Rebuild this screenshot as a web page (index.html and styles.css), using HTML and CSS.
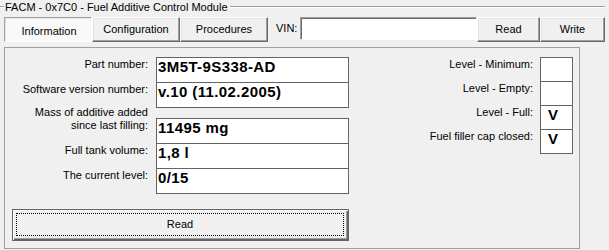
FILE: index.html
```html
<!DOCTYPE html>
<html lang="en">
<head>
  <meta charset="UTF-8">
  <title>FACM - Fuel Additive Control Module</title>
  <link rel="stylesheet" href="styles.css">
</head>
<body>
  <div class="window">
    <!-- group title -->
    <div class="group-title">
      <span class="line line-start"></span>
      <span class="title">FACM - 0x7C0 - Fuel Additive Control Module</span>
      <span class="line line-end"></span>
    </div>

    <!-- tabs + VIN -->
    <div class="toolbar">
      <div class="tabs">
        <button class="tab active">Information</button>
        <button class="tab">Configuration</button>
        <button class="tab">Procedures</button>
      </div>
      <label class="vin-label" for="vin">VIN:</label>
      <input id="vin" class="vin-input" type="text">
      <button class="btn btn-read">Read</button>
      <button class="btn btn-write">Write</button>
    </div>

    <!-- information page -->
    <div class="panel">
      <div class="fields">
        <div class="left-col">
          <div class="row">
            <span class="label">Part number:</span>
            <div class="value">3M5T-9S338-AD</div>
          </div>
          <div class="row">
            <span class="label">Software version number:</span>
            <div class="value">v.10 (11.02.2005)</div>
          </div>
          <div class="row tall">
            <span class="label">Mass of additive added<br>since last filling:</span>
            <div class="value">11495 mg</div>
          </div>
          <div class="row">
            <span class="label">Full tank volume:</span>
            <div class="value">1,8 l</div>
          </div>
          <div class="row">
            <span class="label">The current level:</span>
            <div class="value">0/15</div>
          </div>
        </div>

        <div class="right-col">
          <div class="row">
            <span class="label">Level - Minimum:</span>
            <div class="flag"></div>
          </div>
          <div class="row">
            <span class="label">Level - Empty:</span>
            <div class="flag"></div>
          </div>
          <div class="row">
            <span class="label">Level - Full:</span>
            <div class="flag">V</div>
          </div>
          <div class="row">
            <span class="label">Fuel filler cap closed:</span>
            <div class="flag">V</div>
          </div>
        </div>
      </div>

      <button class="btn-default"><span class="focus">Read</span></button>
    </div>
  </div>
</body>
</html>
```

FILE: styles.css
```css
/* base */
body {
  margin: 0;
  background: #f0f0f0;
  font-family: 'Liberation Sans', Arial, sans-serif;
  font-size: 11px;
  line-height: 13px;
  color: #000;
}

.window {
  width: 609px;
  height: 250px;
  overflow: hidden;
}

/* group title */
.group-title {
  display: flex;
  align-items: center;
  width: 605px;
  height: 14px;
}

.line {
  height: 0;
  border-top: 1px solid #a0a0a0;
  border-bottom: 1px solid #fff;
}

.line-start {
  width: 4px;
}

.title {
  margin: 0 2px 0 1px;
  white-space: nowrap;
}

.line-end {
  flex: 1;
}

/* toolbar */
.toolbar {
  display: flex;
  align-items: flex-start;
  margin: 3px 0 0 4px;
}

.tabs {
  display: flex;
}

button {
  font: inherit;
  color: #000;
  margin: 0;
  padding: 0;
}

.tab,
.btn {
  height: 25px;
  background: #f0f0f0;
  border: 1px solid;
  border-color: #fff #696969 #696969 #fff;
  box-shadow: inset -1px -1px #a0a0a0, inset 1px 1px #e3e3e3;
}

.tab {
  width: 88px;
}

.tab.active {
  background: #f9f9f9;
  border-color: #a0a0a0 #fff #fff #a0a0a0;
  box-shadow: inset 1px 1px #e3e3e3;
  padding: 3px 0 0 2px;
}

.vin-label {
  width: 24px;
  margin: 5px 0 0 8px;
}

.vin-input {
  box-sizing: border-box;
  width: 177px;
  height: 23px;
  margin: 0;
  padding: 0 2px;
  background: #fff;
  border: 1px solid;
  border-color: #a0a0a0 #fff #fff #a0a0a0;
  box-shadow: inset 1px 1px #696969;
  outline: none;
}

.btn-read {
  width: 63px;
}

.btn-write {
  width: 65px;
}

/* information page */
.panel {
  box-sizing: border-box;
  width: 576px;
  margin: 5px 0 0 4px;
  padding: 9px 6px 7px 7px;
  border: 1px solid #a0a0a0;
}

.fields {
  display: flex;
  justify-content: space-between;
}

.row {
  display: flex;
  align-items: flex-start;
}

.row + .row {
  margin-top: -1px;
}

.row.tall {
  margin-top: -3px;
}

.label {
  padding-top: 1px;
  text-align: right;
  white-space: nowrap;
}

.left-col .label {
  width: 136px;
  margin-right: 8px;
}

.row.tall .value {
  margin-top: 13px;
}

.value,
.flag {
  box-sizing: border-box;
  background: #fff;
  border: 1px solid #646464;
  font-weight: bold;
  font-size: 15px;
  line-height: 18px;
  letter-spacing: 0.4px;
  white-space: nowrap;
}

.value {
  width: 193px;
  height: 26px;
  padding-left: 1px;
}

.right-col .row {
  justify-content: flex-end;
}

.right-col .label {
  margin-right: 7px;
}

.flag {
  width: 33px;
  height: 25px;
  padding-left: 7px;
}

/* default button */
.btn-default {
  display: flex;
  box-sizing: border-box;
  width: 337px;
  height: 32px;
  margin-top: 15px;
  padding: 3px 4px 4px 3px;
  background: #f0f0f0;
  border: 1px solid #646464;
  box-shadow: inset 1px 1px #fff, inset -1px -1px #646464, inset -2px -2px #a0a0a0;
}

.focus {
  flex: 1;
  display: flex;
  align-items: center;
  justify-content: center;
  border: 1px dotted #000;
}
```
